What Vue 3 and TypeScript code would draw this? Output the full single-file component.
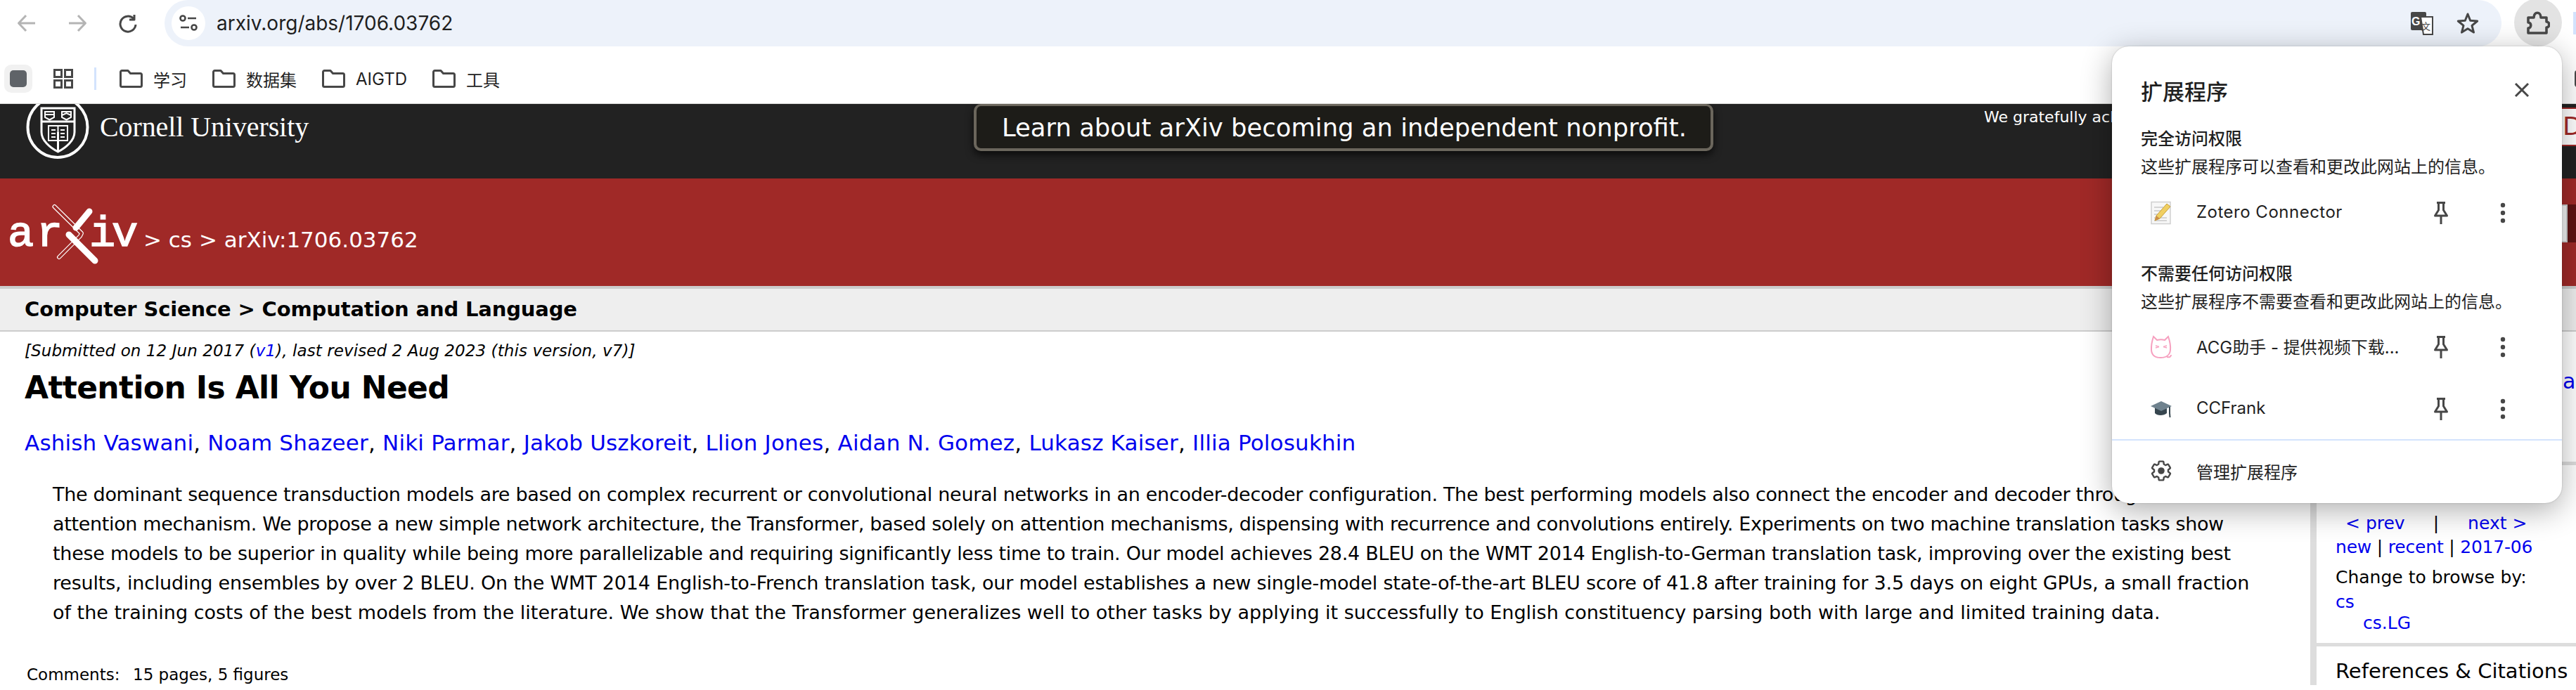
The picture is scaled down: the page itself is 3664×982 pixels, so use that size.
<script setup lang="ts">
interface AbstractLine { text: string; spacing: number }
const folders: string[] = ['学习', '数据集', 'AIGTD', '工具']
const authors: string[] = ['Ashish Vaswani', 'Noam Shazeer', 'Niki Parmar', 'Jakob Uszkoreit', 'Llion Jones', 'Aidan N. Gomez', 'Lukasz Kaiser', 'Illia Polosukhin']
const abstractLines: AbstractLine[] = [
  { text: 'The dominant sequence transduction models are based on complex recurrent or convolutional neural networks in an encoder-decoder configuration. The best performing models also connect the encoder and decoder through an', spacing: -0.31 },
  { text: 'attention mechanism. We propose a new simple network architecture, the Transformer, based solely on attention mechanisms, dispensing with recurrence and convolutions entirely. Experiments on two machine translation tasks show', spacing: -0.34 },
  { text: 'these models to be superior in quality while being more parallelizable and requiring significantly less time to train. Our model achieves 28.4 BLEU on the WMT 2014 English-to-German translation task, improving over the existing best', spacing: -0.28 },
  { text: 'results, including ensembles by over 2 BLEU. On the WMT 2014 English-to-French translation task, our model establishes a new single-model state-of-the-art BLEU score of 41.8 after training for 3.5 days on eight GPUs, a small fraction', spacing: -0.19 },
  { text: 'of the training costs of the best models from the literature. We show that the Transformer generalizes well to other tasks by applying it successfully to English constituency parsing both with large and limited training data.', spacing: 0 },
]
</script>

<template>
  <div class="page">
    <header class="toolbar">
      <button class="nav-btn">
        <svg width="28" height="26" viewBox="0 0 28 26"><path class="st-light" d="M26 13H3M13 2 2.500 13 13 24" /></svg>
      </button>
      <button class="nav-btn">
        <svg width="28" height="26" viewBox="0 0 28 26"><path class="st-light" d="M2 13h23M15 2l10.500 11L15 24" /></svg>
      </button>
      <button class="nav-btn">
        <svg width="28" height="28" viewBox="0 0 28 28"><path class="st-dark" d="M22 7.500A11 11 0 1 0 25 16" /><path class="st-dark" d="M23 2v7h-7" /></svg>
      </button>
      <div class="omnibox">
        <span class="site-info">
          <svg width="26" height="24" viewBox="0 0 26 24"><circle class="st-thin" cx="5" cy="5" r="3.500" /><path class="st-thin" d="M12 5h12M2 18h12" /><circle class="st-thin" cx="21" cy="18" r="3.500" /></svg>
        </span>
        <span class="url">arxiv.org/abs/1706.03762</span>
        <span class="omni-right">
          <svg class="translate" width="34" height="34" viewBox="0 0 34 34">
            <rect x="1" y="1" width="22" height="26" rx="2" fill="#474747" />
            <path d="M15 8h17v25H19z" fill="#fff" stroke="#474747" stroke-width="2" />
            <text x="2" y="20" class="tr-g">G</text>
            <text x="16" y="26" class="tr-w">文</text>
          </svg>
          <svg class="star" width="32" height="32" viewBox="0 0 32 32"><path class="st-dark" d="M16 3l3.700 9.300 10 .7-7.700 6.400 2.500 9.700L16 23.800 7.500 29.100 10 19.400 2.300 13l10-.7z" /></svg>
        </span>
      </div>
      <button class="ext-btn">
        <svg width="34" height="35" viewBox="0 0 34 35"><path class="st-puzzle" d="M3 10h8c0-9 10-9 10 0h8v6c5 0 5 8 0 8v8H3v-7c5 0 5-8 0-8z" /></svg>
      </button>
      <span class="avatar-edge"></span>
    </header>

    <nav class="bookmarks">
      <span class="side-toggle"><i></i></span>
      <svg class="apps" width="28" height="28" viewBox="0 0 28 28"><path class="st-apps" d="M1.500 1.500h10v10h-10zM16.500 1.500h10v10h-10zM1.500 16.500h10v10h-10zM16.500 16.500h10v10h-10z" /></svg>
      <span class="bm-sep"></span>
      <span v-for="name in folders" :key="name" class="folder">
        <svg width="33" height="26" viewBox="0 0 33 26"><path class="st-dark" d="M3.500 1.500h8.500l3.500 4h14a2 2 0 0 1 2 2v15a2 2 0 0 1-2 2h-26a2 2 0 0 1-2-2V3.500a2 2 0 0 1 2-2z" /></svg>
        <span>{{ name }}</span>
      </span>
      <span class="other-edge"></span>
    </nav>

    <main class="site">
      <section class="top-band">
        <div class="cornell">
          <svg class="seal" width="92" height="92" viewBox="0 0 92 92">
            <ellipse cx="45" cy="46" rx="42.500" ry="43" class="seal-line" stroke-width="4" />
            <path class="seal-line" d="M22 19h47v34c0 12-12 22-23.500 28C34 75 22 65 22 53z" stroke-width="3" />
            <path class="seal-line" d="M22 38h47M45.500 53v28" stroke-width="3" />
            <path class="seal-line" d="M27 24h13v8l-6.500 3.500L27 32zM51 24h13v8l-6.500 3.500L51 32zM27 28h13M51 29l6.500-3 6.500 3" stroke-width="2" />
            <path class="seal-line" d="M32 44h27v21H32zM45.500 44v21M36 50h6M36 55h6M36 60h6M49 50h6M49 55h6M49 60h6" stroke-width="2" />
          </svg>
          <span class="cornell-name">Cornell University</span>
        </div>
        <div class="banner-cell"><a class="banner">Learn about arXiv becoming an independent nonprofit.</a></div>
        <div class="thanks">We gratefully acknowledge support from the Simons Foundation.</div>
        <div class="donate"><span>Donate</span></div>
      </section>

      <section class="crumb-band">
        <svg class="arxiv-logo" width="188" height="92" viewBox="-6 0 188 92">
          <text x="-3" y="61" class="logo-letter">a</text>
          <text x="38" y="61" class="logo-letter">r</text>
          <text x="113" y="61" class="logo-letter">i</text>
          <text x="145" y="61" class="logo-letter">v</text>
          <path d="M63.500 5 102 43 100 47 70 77" class="x-out" />
          <path d="M63.500 5 102 43 100 47 70 77" class="x-in" />
          <path d="M84 45 121 82" class="x-thick" />
          <path d="M113 12 94 35" class="x-thick" />
        </svg>
        <span class="crumbs">&gt; cs &gt; arXiv:1706.03762</span>
        <span class="search-box"></span>
        <span class="search-go"></span>
      </section>

      <section class="subject"><span>Computer Science &gt; Computation and Language</span></section>

      <div class="columns">
        <article class="paper">
          <p class="dateline">[Submitted on 12 Jun 2017 (<a>v1</a>), last revised 2 Aug 2023 (this version, v7)]</p>
          <h1 class="title">Attention Is All You Need</h1>
          <p class="authors">
            <template v-for="(a, i) in authors" :key="a"><a>{{ a }}</a><template v-if="i < authors.length - 1">, </template></template>
          </p>
          <blockquote class="abstract">
            <span v-for="line in abstractLines" :key="line.text" class="abs-line" :style="{ letterSpacing: line.spacing + 'px' }">{{ line.text }}</span>
          </blockquote>
          <p class="comments"><span class="c-label">Comments:</span><span>15 pages, 5 figures</span></p>
        </article>

        <aside class="sidebar">
          <div class="side-access"><a>al</a></div>
          <div class="side-browse">
            <b class="ctx">cs.CL</b>
            <div class="prevnext"><a>&lt; prev</a><span class="pipe">|</span><a>next &gt;</a></div>
            <div class="browse-line"><a>new</a> | <a>recent</a> | <a>2017-06</a></div>
            <div class="change">Change to browse by:</div>
            <div class="cs"><a>cs</a></div>
            <div class="cslg"><a>cs.LG</a></div>
          </div>
          <div class="side-refs">References &amp; Citations</div>
        </aside>
      </div>
    </main>

    <div class="popup">
      <div class="pop-head">
        <span class="pop-title">扩展程序</span>
        <svg class="pop-close" width="22" height="22" viewBox="0 0 22 22"><path class="st-dark" d="M2 2l18 18M20 2 2 20" /></svg>
      </div>
      <div class="pop-label first">完全访问权限</div>
      <div class="pop-desc">这些扩展程序可以查看和更改此网站上的信息。</div>
      <div class="ext-row r1">
        <svg width="32" height="34" viewBox="0 0 32 34">
          <rect x="2" y="1.500" width="27" height="31" fill="#f7f7f7" stroke="#cfcfcf" stroke-width="1.500" />
          <path d="M6 9h13M6 14h12M6 19h8M6 24h18M6 28h18" stroke="#c9c9c9" stroke-width="1.500" />
          <path d="M24 4l5 4-15 17-7 3 2-7z" fill="#f0cf62" stroke="#c79f35" stroke-width="1" />
          <path d="M9 21l5 4-7 3z" fill="#c98d4b" />
        </svg>
        <span class="ext-name">Zotero Connector</span>
        <svg width="22" height="32" viewBox="0 0 22 32"><path class="st-pin" d="M5 1.500h12M7.500 1.500V12L2.500 20h17l-5-8V1.500M11 20v12" /></svg>
        <svg class="dots" width="8" height="30" viewBox="0 0 8 30"><circle cx="4" cy="4" r="3.200" /><circle cx="4" cy="15" r="3.200" /><circle cx="4" cy="26" r="3.200" /></svg>
      </div>
      <div class="pop-label second">不需要任何访问权限</div>
      <div class="pop-desc">这些扩展程序不需要查看和更改此网站上的信息。</div>
      <div class="ext-row r2">
        <svg width="32" height="34" viewBox="0 0 32 34">
          <path d="M5 2l5 5c4-1 8-1 11 0l5-5c2.500 7 3.500 13 3 19-.5 8-7 11-14 11S2.500 29 2 21C1.700 14 3 8 5 2zM24 31c4 1 6-.5 6-3" fill="#fff" stroke="#f6a0bf" stroke-width="2" />
          <path d="M8 15l5 1.500M8 18l5-1.500M24 15l-5 1.500M24 18l-5-1.500" stroke="#f6a0bf" stroke-width="1.400" fill="none" />
        </svg>
        <span class="ext-name">ACG助手 - 提供视频下载...</span>
        <svg width="22" height="32" viewBox="0 0 22 32"><path class="st-pin" d="M5 1.500h12M7.500 1.500V12L2.500 20h17l-5-8V1.500M11 20v12" /></svg>
        <svg class="dots" width="8" height="30" viewBox="0 0 8 30"><circle cx="4" cy="4" r="3.200" /><circle cx="4" cy="15" r="3.200" /><circle cx="4" cy="26" r="3.200" /></svg>
      </div>
      <div class="ext-row r3">
        <svg width="32" height="24" viewBox="0 0 32 24">
          <path d="M7 10v8c3 4 13 4 17 0v-8z" fill="#37464f" />
          <path d="M16 1 31 8 16 15 1 8z" fill="#6f828e" />
          <path d="M28 9v10" stroke="#37464f" stroke-width="2" />
          <path d="M27 18h2l.5 6h-2z" fill="#37464f" />
        </svg>
        <span class="ext-name">CCFrank</span>
        <svg width="22" height="32" viewBox="0 0 22 32"><path class="st-pin" d="M5 1.500h12M7.500 1.500V12L2.500 20h17l-5-8V1.500M11 20v12" /></svg>
        <svg class="dots" width="8" height="30" viewBox="0 0 8 30"><circle cx="4" cy="4" r="3.200" /><circle cx="4" cy="15" r="3.200" /><circle cx="4" cy="26" r="3.200" /></svg>
      </div>
      <div class="pop-divider"></div>
      <div class="ext-row r4">
        <svg width="32" height="32" viewBox="0 0 24 24">
          <path class="st-gear" d="M19.430 12.980c.04-.32.07-.64.07-.98s-.03-.66-.07-.98l2.110-1.650c.19-.15.24-.42.12-.64l-2-3.460c-.12-.22-.39-.3-.61-.22l-2.490 1c-.52-.4-1.080-.73-1.690-.98l-.38-2.650C14.460 2.180 14.250 2 14 2h-4c-.25 0-.46.18-.49.42l-.38 2.650c-.61.25-1.170.59-1.690.98l-2.490-1c-.23-.09-.49 0-.61.22l-2 3.460c-.13.22-.07.49.12.64l2.110 1.650c-.04.32-.07.65-.07.98s.03.66.07.98l-2.110 1.650c-.19.15-.24.42-.12.64l2 3.460c.12.22.39.3.61.22l2.490-1c.52.4 1.080.73 1.690.98l.38 2.650c.03.24.24.42.49.42h4c.25 0 .46-.18.49-.42l.38-2.650c.61-.25 1.170-.59 1.690-.98l2.490 1c.23.09.49 0 .61-.22l2-3.460c.12-.22.07-.49-.12-.64l-2.110-1.650z" />
          <circle cx="12" cy="12" r="3.600" fill="#474747" />
        </svg>
        <span class="ext-name">管理扩展程序</span>
      </div>
    </div>
  </div>
</template>

<style scoped>
.page {
  position: relative;
  width: 3664px;
  height: 982px;
  overflow: hidden;
  background: #fff;
  font-family: Inter, "Noto Sans CJK SC", sans-serif;
  color: #000;
}
a { color: #0000ee; }
p, h1, blockquote { margin: 0; }
button { border: 0; padding: 0; background: none; }

.st-light, .st-dark, .st-thin, .st-puzzle, .st-apps, .st-pin, .st-gear { fill: none; stroke-linejoin: round; }
.st-light { stroke: #b4b4b4; stroke-width: 3; }
.st-dark { stroke: #474747; stroke-width: 3; }
.st-thin { stroke: #474747; stroke-width: 2.600; }
.st-puzzle { stroke: #474747; stroke-width: 3.600; }
.st-apps { stroke: #474747; stroke-width: 3; stroke-linejoin: miter; }
.st-pin { stroke: #474747; stroke-width: 3; }
.st-gear { stroke: #474747; stroke-width: 1.800; }

.toolbar { display: flex; align-items: center; height: 66px; }
.nav-btn { width: 72px; height: 66px; display: flex; align-items: center; justify-content: center; flex: none; margin-right: 0; }
.nav-btn:first-child { margin-left: 2px; }
.omnibox {
  display: flex; align-items: center;
  width: 3324px; height: 66px; margin-left: 16px; padding-left: 10px; box-sizing: border-box;
  background: #edf2fa; border-radius: 33px;
}
.site-info { width: 48px; height: 48px; border-radius: 50%; background: #fff; display: flex; align-items: center; justify-content: center; flex: none; }
.url { margin-left: 16px; font-size: 28px; color: #1f1f1f; }
.omni-right { margin-left: auto; display: flex; align-items: center; }
.translate { margin-right: 32px; }
.tr-g { font: 700 16px "Liberation Sans", sans-serif; fill: #fff; }
.tr-w { font: 400 13px "Noto Sans CJK SC", sans-serif; fill: #474747; }
.star { margin-right: 32px; }
.ext-btn {
  width: 68px; height: 68px; margin-left: 18px; flex: none; border-radius: 50%; background: #e3e3e3;
  display: flex; align-items: center; justify-content: center; margin-top: -2px;
}
.avatar-edge { width: 4px; height: 32px; margin-left: 16px; background: #d3e3fd; flex: none; }

.bookmarks { display: flex; align-items: center; height: 81px; padding: 26px 0 15px 6px; box-sizing: border-box; }
.side-toggle { width: 40px; height: 40px; border-radius: 10px; background: #f1f1f1; display: flex; align-items: center; justify-content: center; flex: none; }
.side-toggle i { display: block; width: 24px; height: 24px; border-radius: 5px; background: #5f6368; }
.apps { margin-left: 30px; flex: none; }
.bm-sep { width: 3px; height: 32px; margin: 0 -3px 0 30px; background: #d3e3fd; flex: none; }
.folder { display: flex; align-items: center; gap: 15px; font-size: 24px; color: #1f1f1f; margin-left: 36px; }
.other-edge { width: 4px; height: 24px; background: #474747; border-radius: 4px 0 0 4px; margin-left: auto; margin-right: -2px; }

.site { border-top: 1px solid #d9d9d6; }
.top-band {
  display: grid;
  grid-template-columns: 1385px 1437px 822px 20px;
  height: 106px; background: #222; overflow: hidden;
}
.cornell { display: flex; align-items: flex-start; padding-left: 37px; }
.seal { flex: none; margin-top: -13px; }
.seal-line { fill: none; stroke: #fff; }
.cornell-name { margin-left: 13px; margin-top: 9px; font: 400 40px/48px "Liberation Serif", serif; letter-spacing: -.1px; color: #fff; white-space: nowrap; }
.banner {
  display: block; box-sizing: border-box; width: 1052px; height: 67px; padding-left: 36px;
  background: #1d1c18; border: 4px solid #6b665c; border-top-width: 3px; border-radius: 10px;
  box-shadow: 0 5px 12px rgba(0, 0, 0, .7);
  font: 400 35.400px/62px "DejaVu Sans", sans-serif; color: #fff; white-space: nowrap;
}
.thanks { font: 400 22px/38px "DejaVu Sans", sans-serif; color: #fff; white-space: nowrap; overflow: hidden; }
.donate {
  box-sizing: border-box; width: 120px; height: 55px; margin-top: 5px; background: #fff;
  border-top: 2px solid #a02927; border-bottom: 2px solid #a02927; padding-left: 1px;
  font: 400 36px/50px "DejaVu Sans", sans-serif; color: #a02927;
}

.crumb-band {
  position: relative; display: flex; align-items: center; height: 153px; padding-left: 8px; box-sizing: border-box;
  background: #a02927; overflow: hidden;
}
.arxiv-logo { flex: none; margin-top: 9px; }
.logo-letter { font: 400 62px "Liberation Mono", monospace; fill: #fff; stroke: #fff; stroke-width: 1.600; }
.x-out { fill: none; stroke: #fff; stroke-width: 6; stroke-linecap: round; stroke-linejoin: round; }
.x-in { fill: none; stroke: #a02927; stroke-width: 3.600; stroke-linecap: round; stroke-linejoin: round; }
.x-thick { fill: none; stroke: #fff; stroke-width: 9; stroke-linecap: round; }
.crumbs { margin-left: 8px; margin-top: 20px; font: 400 31px "DejaVu Sans", sans-serif; color: #fff; white-space: nowrap; }
.search-box { margin-left: auto; width: 300px; height: 54px; margin-top: -26px; background: #f4f4f4; border: 2px solid #ccc; box-sizing: border-box; flex: none; }
.search-go { width: 12px; height: 54px; margin-top: -26px; background: #5f1313; flex: none; }

.subject {
  box-sizing: border-box; height: 65px; padding-left: 35px; background: #eee;
  border-top: 4px solid #ccc; border-bottom: 2px solid #ccc;
  font: 700 29px/59px "DejaVu Sans", sans-serif; letter-spacing: -.15px; white-space: nowrap;
}

.columns { display: grid; grid-template-columns: 3286px 378px; }
.paper { padding: 12px 0 0 35px; min-width: 0; }
.dateline { font: italic 400 23px/30px "DejaVu Sans", sans-serif; letter-spacing: .09px; white-space: nowrap; }
.title { margin-top: 10px; font: 700 44px/56px "DejaVu Sans", sans-serif; letter-spacing: -.65px; white-space: nowrap; }
.authors { margin-top: 30px; font: 400 31px/40px "DejaVu Sans", sans-serif; letter-spacing: .17px; white-space: nowrap; }
.abstract { margin: 33px 0 0 40px; font: 400 27px/42px "DejaVu Sans", sans-serif; }
.abs-line { display: block; white-space: nowrap; }
.comments { margin: 52px 0 0 3px; font: 400 23px/30px "DejaVu Sans", sans-serif; white-space: nowrap; }
.c-label { display: inline-block; width: 151px; }

.sidebar { border-left: 9px solid #ddd; font: 400 25px/30px "DejaVu Sans", sans-serif; overflow: hidden; }
.side-access { box-sizing: border-box; height: 190px; padding: 56px 0 0 350px; border-bottom: 5px solid #ddd; font-size: 30px; white-space: nowrap; }
.side-browse { box-sizing: border-box; height: 258px; padding: 31px 0 0 27px; border-bottom: 5px solid #ddd; white-space: nowrap; }
.ctx { display: block; height: 30px; font-weight: 700; }
.prevnext { display: flex; margin-top: 7px; padding-left: 14px; }
.pipe { margin-left: 40px; margin-right: 41px; }
.browse-line { margin-top: 4px; letter-spacing: -.2px; }
.change { margin-top: 13px; }
.cs { margin-top: 5px; }
.cslg { padding-left: 39px; }
.side-refs { padding: 15px 0 0 27px; font-size: 29px; line-height: 40px; white-space: nowrap; }

.popup {
  position: absolute; top: 66px; right: 20px; width: 640px; height: 650px;
  box-sizing: border-box; background: #fff; border-radius: 24px;
  box-shadow: 0 0 2px rgba(0, 0, 0, .25), 0 10px 44px rgba(0, 0, 0, .32);
  color: #1f1f1f;
}
.pop-head { display: flex; align-items: center; justify-content: space-between; height: 40px; padding: 45px 46px 0 41px; }
.pop-title { font-size: 31px; font-weight: 500; line-height: 40px; }
.pop-close { margin-top: -6px; }
.pop-label { padding-left: 41px; font-size: 24px; font-weight: 500; line-height: 32px; white-space: nowrap; }
.pop-label.first { margin-top: 31px; }
.pop-label.second { margin-top: 41px; }
.pop-desc { padding-left: 41px; margin-top: 8px; font-size: 24px; line-height: 32px; white-space: nowrap; }
.ext-row {
  display: grid; grid-template-columns: 66px 333px 30px 58px 30px; align-items: center; justify-items: start;
  height: 60px; padding-left: 54px; font-size: 24px;
}
.ext-row > svg:nth-of-type(2) { justify-self: center; }
.ext-row > .dots { justify-self: center; fill: #474747; grid-column: 5; }
.ext-name { white-space: nowrap; margin-top: -3px; }
.r1 { margin-top: 19px; }
.r1 .ext-name { letter-spacing: .5px; }
.r2 { margin-top: 18px; }
.r3 { margin-top: 28px; }
.r4 { margin-top: 13px; }
.r4 .ext-name { margin-top: 0; }
.pop-divider { height: 2px; margin-top: 13px; background: #d3e3fd; }
</style>
